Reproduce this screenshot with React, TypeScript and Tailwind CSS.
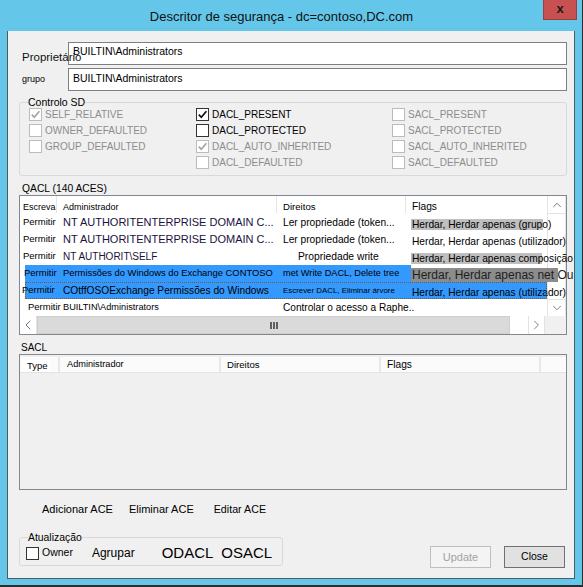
import React from 'react';
import { ChevronDown, ChevronLeft, ChevronRight, ChevronUp } from 'lucide-react';

type SdFlag = { label: string; checked?: boolean; disabled?: boolean };

const sdColumns: { width: string; flags: SdFlag[] }[] = [
  {
    width: 'w-[167px]',
    flags: [
      { label: 'SELF_RELATIVE', checked: true, disabled: true },
      { label: 'OWNER_DEFAULTED', disabled: true },
      { label: 'GROUP_DEFAULTED', disabled: true },
    ],
  },
  {
    width: 'w-[196px]',
    flags: [
      { label: 'DACL_PRESENT', checked: true },
      { label: 'DACL_PROTECTED' },
      { label: 'DACL_AUTO_INHERITED', checked: true, disabled: true },
      { label: 'DACL_DEFAULTED', disabled: true },
    ],
  },
  {
    width: 'flex-1',
    flags: [
      { label: 'SACL_PRESENT', disabled: true },
      { label: 'SACL_PROTECTED', disabled: true },
      { label: 'SACL_AUTO_INHERITED', disabled: true },
      { label: 'SACL_DEFAULTED', disabled: true },
    ],
  },
];

const CheckBox: React.FC<{ checked?: boolean; disabled?: boolean }> = ({ checked, disabled }) => (
  <span
    className={`flex h-[13px] w-[13px] shrink-0 items-center justify-center border bg-white ${
      disabled ? 'border-[#bcbcbc]' : 'border-[#333333]'
    }`}
  >
    {checked && (
      <svg width="11" height="11" viewBox="0 0 11 11">
        <path
          d="M1.8 5.6 4.3 8.3 9.4 2.3"
          fill="none"
          stroke={disabled ? '#a3a3a3' : '#111111'}
          strokeWidth="1.7"
        />
      </svg>
    )}
  </span>
);

// list row + column classes
const row = 'ml-[5px] flex h-[17px] w-[522px] shrink-0 items-center whitespace-nowrap';
const c1 = 'w-[32px] shrink-0 text-[9.5px]';
const c2 = 'w-[220px] shrink-0 pl-[6px]';
const c3 = 'w-[129px] shrink-0 pl-[6px]';
const c4 = 'w-[141px] shrink-0 pl-[5px]';

const DaclList: React.FC = () => (
  <div className="flex h-[140px] shrink-0 flex-col border border-[#828790] bg-white">
    <div className="flex h-[120px]">
      <div className="relative z-10 flex w-[527px] flex-col">
        {/* header */}
        <div className="flex h-[18px] shrink-0 items-end pb-[1px] text-black">
          <div className="h-full w-[37px] border-r border-[#e5e5e5] pl-[3px] pt-[5px] text-[9px]">Escreva</div>
          <div className="h-full w-[220px] border-r border-[#e5e5e5] pl-[6px] pt-[5px] text-[9px]">Administrador</div>
          <div className="h-full w-[129px] border-r border-[#e5e5e5] pl-[6px] pt-[4px] text-[9.6px]">Direitos</div>
          <div className="h-full flex-1 pl-[6px] pt-[3px] text-[10.2px]">Flags</div>
        </div>

        <div className={row}>
          <div className={c1}><span className="-ml-[2px]">Permitir</span></div>
          <div className={`${c2} text-[11px] text-[#22103e]`}>NT AUTHORITENTERPRISE DOMAIN C...</div>
          <div className={`${c3} text-[10.2px]`}>Ler propriedade (token...</div>
          <div className={c4}>
            <span className="bg-[linear-gradient(to_right,#bfbfbf_132px,transparent_132px)] pl-[1px] text-[10.2px]">
              Herdar, Herdar apenas (grupo)
            </span>
          </div>
        </div>

        <div className={row}>
          <div className={c1}><span className="-ml-[2px]">Permitir</span></div>
          <div className={`${c2} text-[11px] text-[#22103e]`}>NT AUTHORITENTERPRISE DOMAIN C...</div>
          <div className={`${c3} text-[10.2px]`}>Ler propriedade (token...</div>
          <div className={c4}>
            <span className="pl-[1px] text-[10.2px]">Herdar, Herdar apenas (utilizador)</span>
          </div>
        </div>

        <div className={row}>
          <div className={c1}><span className="-ml-[2px]">Permitir</span></div>
          <div className={`${c2} text-[10px] text-[#1a1238]`}>NT AUTHORIT\SELF</div>
          <div className={`${c3} pl-[21px] text-[10.3px]`}>Propriedade write</div>
          <div className={c4}>
            <span className="bg-[linear-gradient(to_right,#bfbfbf_131px,transparent_131px)] pl-[1px] text-[10.2px]">
              Herdar, Herdar apenas composição
            </span>
          </div>
        </div>

        <div className={`${row} bg-[linear-gradient(to_right,#3399ff_386px,transparent_386px)]`}>
          <div className={c1}><span className="-ml-[1px]">Permitir</span></div>
          <div className={`${c2} text-[9.4px]`}>Permissões do Windows do Exchange CONTOSO</div>
          <div className={`${c3} pl-[4px] text-[9.2px]`}>met Write DACL, Delete tree</div>
          <div className={c4}>
            <span className="bg-[linear-gradient(to_right,#8c8c8c_147px,transparent_147px)] pl-[1px] text-[12px] text-[#1e1e1e]">
              Herdar, Herdar apenas net Ou
            </span>
          </div>
        </div>

        <div className={`${row} bg-[#3399ff] outline-1 -outline-offset-1 outline-[#7a5a34] outline-dotted`}>
          <div className={c1}><span className="-ml-[3px]">Permitir</span></div>
          <div className={`${c2} text-[10.2px]`}>COtffOSOExchange Permissões do Windows</div>
          <div className={`${c3} text-[7.9px]`}>Escrever DACL, Eliminar árvore</div>
          <div className={c4}>
            <span className="pl-[1px] text-[10.2px]">Herdar, Herdar apenas (utilizador)</span>
          </div>
        </div>

        <div className={row}>
          <div className={c1}><span className="ml-[3px]">Permitir</span></div>
          <div className={`${c2} text-[9.2px]`}>BUILTIN\Administrators</div>
          <div className={`${c3} text-[10.1px]`}>Controlar o acesso a Raphe..</div>
          <div className={c4} />
        </div>
      </div>

      {/* vertical scrollbar */}
      <div className="flex w-[19px] flex-col border-x border-[#e3e3e3] bg-white">
        <div className="flex h-[18px] items-center justify-center border-b border-[#e3e3e3]">
          <ChevronUp size={14} strokeWidth={1.4} color="#606060" />
        </div>
        <div className="flex-1" />
        <div className="flex h-[17px] items-center justify-center border-t border-[#e3e3e3]">
          <ChevronDown size={14} strokeWidth={1.4} color="#606060" />
        </div>
      </div>
    </div>

    {/* horizontal scrollbar */}
    <div className="flex h-[18px] shrink-0">
      <div className="flex w-[17px] items-center justify-center border-r border-[#e3e3e3] bg-white">
        <ChevronLeft size={16} strokeWidth={1.3} color="#606060" />
      </div>
      <div className="flex w-[473px] items-center justify-center border border-[#cfcfcf] bg-[#dadada]">
        <svg width="8" height="7" viewBox="0 0 8 7">
          <rect x="0" y="0" width="2" height="7" fill="#606060" />
          <rect x="3" y="0" width="2" height="7" fill="#606060" />
          <rect x="6" y="0" width="2" height="7" fill="#606060" />
        </svg>
      </div>
      <div className="w-[18px] bg-white" />
      <div className="flex w-[17px] items-center justify-center border-x border-[#e3e3e3] bg-white">
        <ChevronRight size={16} strokeWidth={1.3} color="#606060" />
      </div>
      <div className="flex-1 bg-[#f0f0f0]" />
    </div>
  </div>
);

const SaclList: React.FC = () => (
  <div className="flex h-[136px] shrink-0 flex-col border border-[#828790] bg-[#f0f0f0] pt-[2px]">
    <div className="flex h-[16px] border-b border-[#e3e3e3] bg-[#fbfbfb] text-black">
      <div className="flex h-full w-[40px] items-end border-r-2 border-[#e8e8e8]">
        <span className="ml-[2px] bg-white pl-[5px] pr-[2px] text-[9.5px] leading-[12px]">Type</span>
      </div>
      <div className="flex h-full w-[161px] items-end border-r-2 border-[#e8e8e8] pl-[7px] text-[9.2px]">
        Administrador
      </div>
      <div className="flex h-full w-[160px] items-end border-r-2 border-[#e8e8e8] pl-[6px] text-[9.6px]">
        Direitos
      </div>
      <div className="flex h-full w-[160px] items-center border-r-2 border-[#e8e8e8] pl-[6px] pt-[1px] text-[10.2px]">
        Flags
      </div>
      <div className="flex-1" />
    </div>
  </div>
);

export default function App() {
  return (
    <div className="flex h-[587px] w-[583px] flex-col border-b-2 border-r border-[#2d2d2d] bg-[#64c7e9] font-['Liberation_Sans',Arial,sans-serif] text-black">
      {/* title bar */}
      <div className="relative flex h-[31px] shrink-0 items-center justify-center pr-[19px] pt-[3px] text-[13px] text-[#111111]">
        Descritor de segurança - dc=contoso,DC.com
        <div className="absolute right-[5px] top-0 flex h-[20px] w-[34px] items-center justify-center border border-t-0 border-[#9e3b3b] bg-[#c75050] pb-[2px] text-[13px] font-bold leading-none text-[#1b1b1b]">
          x
        </div>
      </div>

      {/* client area */}
      <div className="ml-[7px] flex h-[548px] w-[568px] shrink-0 flex-col border-x border-b border-[#4d5b62] bg-[#f0f0f0] pl-[11px] pr-[7px] pt-[11px]">
        <div className="flex h-[23px] shrink-0">
          <div className="relative z-10 flex w-[49px] shrink-0 items-end whitespace-nowrap pb-[1px] pl-[3px] text-[11.5px] leading-[13px] text-[#111111]">
            Proprietário
          </div>
          <div className="flex flex-1 items-center border border-[#7f7f7f] bg-white pb-[4px] pl-[4px] text-[10.5px]">
            BUILTIN\Administrators
          </div>
        </div>
        <div className="mt-[3px] flex h-[23px] shrink-0">
          <div className="flex w-[49px] shrink-0 items-center pl-[3px] text-[9px]">grupo</div>
          <div className="flex flex-1 items-center border border-[#7f7f7f] bg-white pb-[1px] pl-[4px] text-[10.5px]">
            BUILTIN\Administrators
          </div>
        </div>

        {/* Controlo SD */}
        <div className="relative mt-[11px] flex h-[74px] shrink-0 rounded-[3px] border border-[#d9d9d9] pl-[9px] pt-[3px]">
          <span className="absolute -top-[7px] left-[8px] bg-[#f0f0f0] text-[10.5px] leading-[12px]">Controlo SD</span>
          {sdColumns.map((col, i) => (
            <div key={i} className={`${col.width} flex flex-col`}>
              {col.flags.map((f) => (
                <div key={f.label} className="flex h-[16px] items-center gap-[3px]">
                  <CheckBox checked={f.checked} disabled={f.disabled} />
                  <span className={`text-[10px] ${f.disabled ? 'text-[#8d8d8d]' : 'text-black'}`}>{f.label}</span>
                </div>
              ))}
            </div>
          ))}
        </div>

        <div className="mt-[6px] h-[13px] shrink-0 pl-[3px] text-[10.3px] leading-[13px]">QACL (140 ACES)</div>
        <DaclList />

        <div className="mt-[6px] h-[13px] shrink-0 pl-[2px] text-[10px] leading-[13px]">SACL</div>
        <SaclList />

        <div className="mt-[12px] flex h-[14px] shrink-0 items-center text-[11px]">
          <span className="ml-[23px]">Adicionar ACE</span>
          <span className="ml-[16px]">Eliminar ACE</span>
          <span className="ml-[20px] text-[10.7px]">Editar ACE</span>
        </div>

        <div className="mt-[21px] flex shrink-0 items-start">
          <div className="relative flex h-[29px] w-[264px] items-center rounded-[3px] border border-[#d9d9d9] pl-[6px] pt-[3px]">
            <span className="absolute -top-[6px] left-[8px] bg-[#f0f0f0] text-[10.4px] leading-[12px]">Atualização</span>
            <CheckBox />
            <span className="ml-[3px] text-[10.5px]">Owner</span>
            <span className="ml-[19px] text-[12px]">Agrupar</span>
            <span className="ml-[27px] text-[15px]">ODACL</span>
            <span className="ml-[8px] text-[15px]">OSACL</span>
          </div>
          <div className="ml-auto mr-[2px] mt-[9px] flex gap-[13px]">
            <button className="flex h-[22px] w-[61px] items-center justify-center border border-[#bfbfbf] bg-[#f4f4f4] text-[11px] text-[#a3a3a3]">
              Update
            </button>
            <button className="flex h-[22px] w-[61px] items-center justify-center border border-[#707070] bg-[#e1e1e1] text-[10.5px] text-black">
              Close
            </button>
          </div>
        </div>
      </div>
    </div>
  );
}
